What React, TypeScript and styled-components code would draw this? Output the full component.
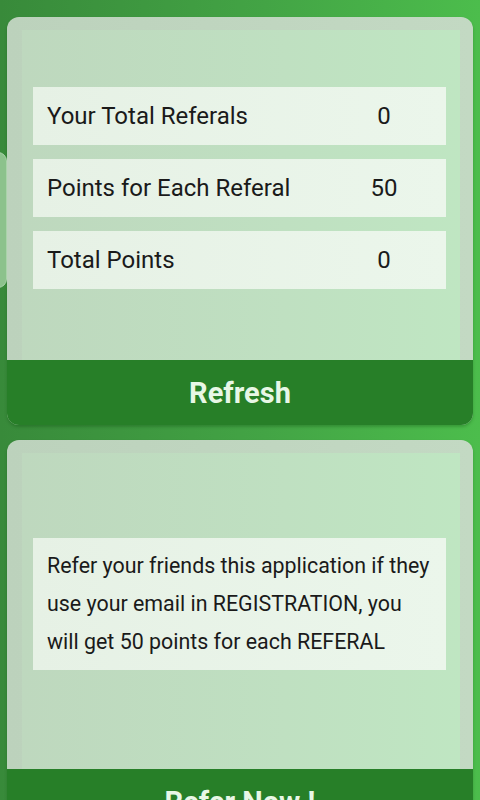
import styled, { createGlobalStyle } from "styled-components"

const GlobalStyle = createGlobalStyle`
  html, body {
    margin: 0;
    padding: 0;
  }
  body {
    font-family: Roboto, "Noto Sans", "Liberation Sans", sans-serif;
    background: linear-gradient(90deg, #388a3a 0%, #43a445 55%, #4cbd4c 100%);
    overflow: hidden;
  }
`

interface StatRow {
  label: string
  value: number
}

const stats: StatRow[] = [
  { label: "Your Total Referals", value: 0 },
  { label: "Points for Each Referal", value: 50 },
  { label: "Total Points", value: 0 },
]

const App = () => {
  return (
    <Page>
      <GlobalStyle />
      <SideHandle />
      <Card>
        <Panel top={57} bottom={71}>
          <Rows>
            {stats.map((s) => (
              <Row key={s.label}>
                <Label>{s.label}</Label>
                <Value>{s.value}</Value>
              </Row>
            ))}
          </Rows>
        </Panel>
        <ActionButton>Refresh</ActionButton>
      </Card>
      <Card>
        <Panel top={85} bottom={99}>
          <Message>
            Refer your friends this application if they use your email in REGISTRATION, you
            will get 50 points for each REFERAL
          </Message>
        </Panel>
        <ActionButton>Refer Now !</ActionButton>
      </Card>
    </Page>
  )
}

export default App

const Page = styled.div`
  position: relative;
  height: 800px;
  padding: 17px 7px 0;
  box-sizing: border-box;
  display: flex;
  flex-direction: column;
  gap: 15px;
  overflow: hidden;
`

const SideHandle = styled.div`
  position: absolute;
  left: -4px;
  top: 152px;
  width: 11px;
  height: 136px;
  border-radius: 0 9px 9px 0;
  background: #8cc28c;
  border: 1px solid #a9d3a9;
  box-sizing: border-box;
`

const Card = styled.section`
  background: linear-gradient(90deg, #bcd2bc 0%, #c3d9c3 100%);
  border-radius: 12px;
  overflow: hidden;
  display: flex;
  flex-direction: column;
  flex-shrink: 0;
  box-shadow: 0 2px 3px rgba(0, 60, 0, 0.25);
`

interface PanelProps {
  top: number
  bottom: number
}

const Panel = styled.div<PanelProps>`
  margin: 13px 13px 0 15px;
  padding: ${(p) => p.top}px 14px ${(p) => p.bottom}px 11px;
  background: linear-gradient(90deg, #bed8be 0%, #bfe0c1 60%, #bfe6c2 100%);
`

const Rows = styled.div`
  display: flex;
  flex-direction: column;
  gap: 14px;
`

const Row = styled.div`
  display: grid;
  grid-template-columns: 1fr 124px;
  align-items: center;
  height: 58px;
  padding-left: 14px;
  background: linear-gradient(90deg, #e6f1e5 0%, #ebf6eb 100%);
  color: #1a1a1a;
  font-size: 24px;
`

const Label = styled.span``

const Value = styled.span`
  text-align: center;
`

const Message = styled.p`
  margin: 0;
  padding: 9px 12px 9px 14px;
  background: linear-gradient(90deg, #e6f1e5 0%, #ebf6eb 100%);
  color: #1a1a1a;
  font-size: 21.4px;
  line-height: 38px;
`

const ActionButton = styled.button`
  height: 65px;
  border: none;
  background: #277f28;
  color: #e8f7e6;
  font-family: Roboto, "Noto Sans", "Liberation Sans", sans-serif;
  font-size: 29px;
  font-weight: 700;
  cursor: pointer;
`
